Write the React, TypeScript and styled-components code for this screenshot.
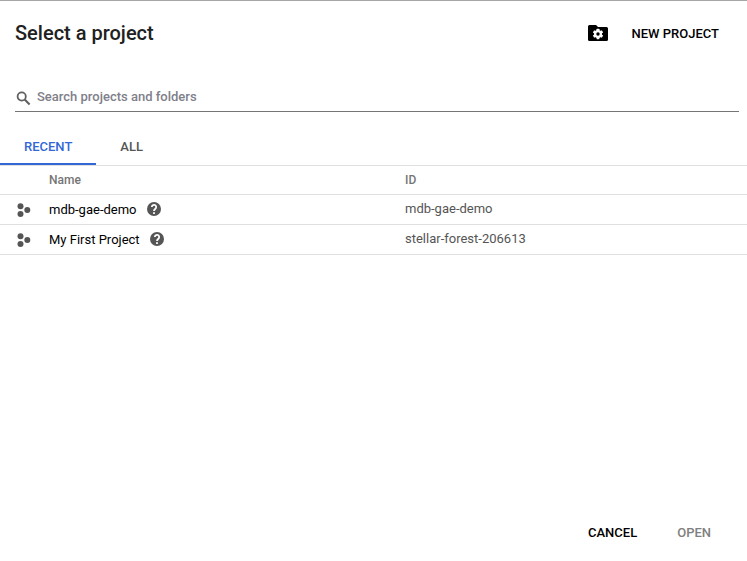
import React, { useState } from "react";
import styled, { createGlobalStyle } from "styled-components";

const GlobalStyle = createGlobalStyle`
  *, *::before, *::after { box-sizing: border-box; }
  body {
    margin: 0;
    background: #fff;
    font-family: Roboto, "Liberation Sans", sans-serif;
    font-size: 13px;
    line-height: 20px;
    color: #000;
  }
  button, input { font: inherit; color: inherit; }
`;

const Dialog = styled.main`
  display: flex;
  flex-direction: column;
  min-height: 100vh;
  border-top: 1px solid #a6a6a6;
`;

const Header = styled.header`
  display: flex;
  align-items: center;
  justify-content: space-between;
  padding: 16px 20px 0 15px;
  height: 50px;
`;

const Title = styled.h1`
  margin: 0;
  padding-bottom: 2px;
  font-size: 20px;
  line-height: 28px;
  font-weight: 500;
  color: #212121;
`;

const TextButton = styled.button`
  display: inline-flex;
  align-items: center;
  gap: 24px;
  padding: 8px;
  border: 0;
  background: none;
  font-weight: 500;
  text-transform: uppercase;
  white-space: nowrap;
  cursor: pointer;

  svg { margin-bottom: 2px; }

  &:disabled {
    color: #808080;
    cursor: default;
  }
`;

const SearchField = styled.label`
  display: flex;
  align-items: center;
  gap: 4px;
  margin: 31px 8px 0 15px;
  height: 30px;
  border-bottom: 1px solid #757575;
  color: #616161;
`;

const SearchInput = styled.input`
  flex: 1;
  min-width: 0;
  height: 28px;
  padding: 0;
  border: 0;
  outline: 0;
  background: none;
  font-weight: 500;
  color: #212121;

  &::placeholder {
    color: #80808a;
    opacity: 1;
  }
`;

const TabList = styled.div`
  display: flex;
  margin-top: 16px;
  height: 38px;
  border-bottom: 1px solid #e0e0e0;
`;

const Tab = styled.button<{ $active: boolean }>`
  padding: 2px 24px 0;
  border: 0;
  border-bottom: 2px solid ${(p) => (p.$active ? "#3367d6" : "transparent")};
  background: none;
  font-weight: 500;
  text-transform: uppercase;
  color: ${(p) => (p.$active ? "#3367d6" : "#555")};
  cursor: pointer;
`;

const Table = styled.table`
  width: 100%;
  table-layout: fixed;
  border-spacing: 0;
`;

const IconColumn = styled.col`
  width: 49px;
`;

const HeadCell = styled.th`
  height: 29px;
  padding: 0;
  border-bottom: 1px solid #e0e0e0;
  font-size: 12px;
  font-weight: 500;
  text-align: left;
  color: #757575;

  &:last-child { padding-left: 7px; }
`;

const Cell = styled.td`
  height: 30px;
  padding: 0;
  border-bottom: 1px solid #e0e0e0;
  color: #555;
`;

const IconCell = styled(Cell)`
  padding-left: 17px;

  svg { display: block; }
`;

const IdCell = styled(Cell)`
  padding: 0 0 2px 7px;
`;

const ProjectName = styled.div`
  display: flex;
  align-items: center;
  gap: 10px;
  color: #000;
`;

const HelpButton = styled.button`
  display: flex;
  padding: 0 0 2px;
  border: 0;
  background: none;
  color: #555;
  cursor: pointer;
`;

const Footer = styled.footer`
  display: flex;
  justify-content: flex-end;
  gap: 24px;
  margin-top: auto;
  padding: 0 28px 10px;
`;

const FolderGearIcon = () => (
  <svg width="20" height="16" viewBox="0 0 20 16" aria-hidden="true">
    <path fill="#000" d="M1.5 0h6.5l2 2h8.5a1.5 1.5 0 0 1 1.5 1.5v11a1.5 1.5 0 0 1-1.5 1.5h-17a1.5 1.5 0 0 1-1.5-1.5v-13a1.5 1.5 0 0 1 1.5-1.5z" />
    <g transform="translate(10 9)" fill="#fff">
      <circle r="4" />
      {[0, 60, 120].map((angle) => (
        <rect key={angle} x="-1.4" y="-5.2" width="2.8" height="10.4" rx="0.4" transform={`rotate(${angle})`} />
      ))}
      <circle r="1.7" fill="#000" />
    </g>
  </svg>
);

const SearchIcon = () => (
  <svg width="18" height="18" viewBox="0 0 18 18" aria-hidden="true">
    <circle cx="6.7" cy="8.5" r="4.1" fill="none" stroke="currentColor" strokeWidth="1.8" />
    <path d="M9.7 11.5l4.9 4.9" stroke="currentColor" strokeWidth="2.1" />
  </svg>
);

const ProjectIcon = () => (
  <svg width="14" height="14" viewBox="0 0 14 14" fill="#555" aria-hidden="true">
    <circle cx="3.5" cy="3.2" r="3" />
    <circle cx="3.5" cy="11" r="3" />
    <circle cx="10.3" cy="7.1" r="3" />
  </svg>
);

const HelpIcon = () => (
  <svg width="14" height="14" viewBox="2 2 20 20" fill="currentColor" aria-hidden="true">
    <circle cx="12" cy="12" r="10" />
    <path
      d="M8.9 9.2a3.1 3.1 0 1 1 5.3 2.2c-1.2 1.2-2.2 1.7-2.2 3.6"
      fill="none"
      stroke="#fff"
      strokeWidth="2.5"
    />
    <rect x="10.7" y="16.6" width="2.6" height="2.5" fill="#fff" />
  </svg>
);

const projects = [
  { name: "mdb-gae-demo", id: "mdb-gae-demo" },
  { name: "My First Project", id: "stellar-forest-206613" },
];

const tabs = ["Recent", "All"];

export default function App() {
  const [activeTab, setActiveTab] = useState("Recent");

  return (
    <>
      <GlobalStyle />
      <Dialog>
        <Header>
          <Title>Select a project</Title>
          <TextButton type="button">
            <FolderGearIcon />
            New project
          </TextButton>
        </Header>
        <SearchField>
          <SearchIcon />
          <SearchInput type="text" aria-label="Search projects and folders" placeholder="Search projects and folders" />
        </SearchField>
        <TabList role="tablist">
          {tabs.map((tab) => (
            <Tab
              key={tab}
              type="button"
              role="tab"
              aria-selected={tab === activeTab}
              $active={tab === activeTab}
              onClick={() => setActiveTab(tab)}
            >
              {tab}
            </Tab>
          ))}
        </TabList>
        <Table>
          <colgroup>
            <IconColumn />
            <col />
            <col />
          </colgroup>
          <thead>
            <tr>
              <HeadCell />
              <HeadCell scope="col">Name</HeadCell>
              <HeadCell scope="col">ID</HeadCell>
            </tr>
          </thead>
          <tbody>
            {projects.map((project) => (
              <tr key={project.id}>
                <IconCell>
                  <ProjectIcon />
                </IconCell>
                <Cell>
                  <ProjectName>
                    {project.name}
                    <HelpButton type="button" aria-label={`About ${project.name}`}>
                      <HelpIcon />
                    </HelpButton>
                  </ProjectName>
                </Cell>
                <IdCell>{project.id}</IdCell>
              </tr>
            ))}
          </tbody>
        </Table>
        <Footer>
          <TextButton type="button">Cancel</TextButton>
          <TextButton type="button" disabled>
            Open
          </TextButton>
        </Footer>
      </Dialog>
    </>
  );
}
